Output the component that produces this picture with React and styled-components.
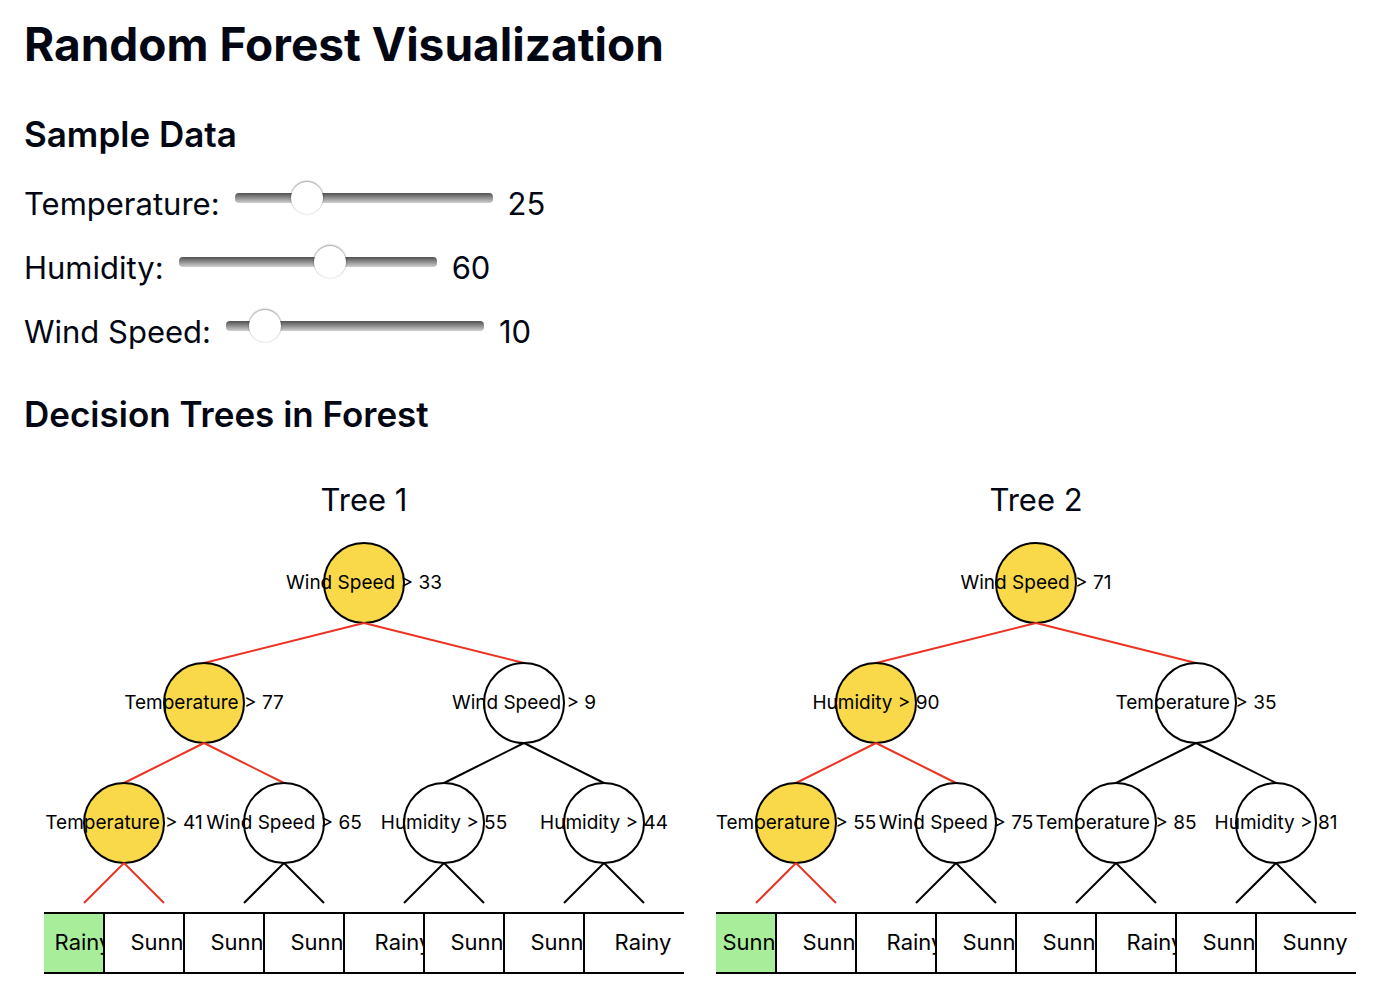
import React, { useState } from "react";
import styled, { createGlobalStyle } from "styled-components";

const GlobalStyle = createGlobalStyle`
  * { box-sizing: border-box; }
  body {
    margin: 0;
    background: #fff;
    color: #020713;
    font-family: Inter, "Liberation Sans", sans-serif;
  }
`;

const Page = styled.main`
  padding: 12px 24px 0;
`;

const Title = styled.h1`
  margin: 0;
  font-size: 46px;
  line-height: 64px;
  font-weight: 700;
`;

const Section = styled.section`
  padding-top: 34px;
`;

const SectionTitle = styled.h2`
  margin: 0;
  font-size: 35px;
  line-height: 48px;
  font-weight: 600;
`;

const Controls = styled.div`
  display: flex;
  flex-direction: column;
  gap: 16px;
  padding-top: 22px;
`;

const ControlRow = styled.div`
  display: flex;
  align-items: center;
  gap: 15px;
  font-size: 31px;
  line-height: 48px;
`;

const Slider = styled.input`
  appearance: none;
  width: 258px;
  height: 34px;
  margin: 0 0 12px;
  background: transparent;

  &::-webkit-slider-runnable-track {
    height: 10px;
    border-radius: 4px;
    background: linear-gradient(#505050, #d0d0d0);
  }

  &::-webkit-slider-thumb {
    appearance: none;
    width: 32px;
    height: 32px;
    margin-top: -11px;
    border-radius: 50%;
    background: #fff;
    box-shadow: 0 -1px 2px rgba(0, 0, 0, 0.35), 0 0 2px rgba(0, 0, 0, 0.2);
  }
`;

const Forest = styled.div`
  display: flex;
  flex-wrap: wrap;
  gap: 32px;
  padding: 38px 0 0 20px;
`;

const TreeFigure = styled.figure`
  margin: 0;
  width: 640px;
`;

const TreeName = styled.figcaption`
  text-align: center;
  font-size: 31px;
  line-height: 48px;
`;

const TreeCanvas = styled.svg`
  display: block;
  width: 100%;
  font-size: 19px;
`;

const Branch = styled.line`
  stroke: ${(p) => (p.$active ? "#eb3323" : "#000")};
  stroke-width: 2;
`;

const NodeCircle = styled.circle`
  fill: ${(p) => (p.$active ? "#f9d849" : "none")};
  stroke: #000;
  stroke-width: 2;
`;

const LeafBox = styled.rect`
  fill: ${(p) => (p.$active ? "#a8ee9a" : "#fff")};
  stroke: #000;
  stroke-width: 2;
`;

const NodeText = styled.text`
  text-anchor: middle;
  fill: #000;
`;

const LeafText = styled(NodeText)`
  font-size: 22px;
`;

const forest = [
  {
    name: "Tree 1",
    levels: [
      ["Wind Speed > 33"],
      ["Temperature > 77", "Wind Speed > 9"],
      ["Temperature > 41", "Wind Speed > 65", "Humidity > 55", "Humidity > 44"],
    ],
    leaves: ["Rainy", "Sunny", "Sunny", "Sunny", "Rainy", "Sunny", "Sunny", "Rainy"],
  },
  {
    name: "Tree 2",
    levels: [
      ["Wind Speed > 71"],
      ["Humidity > 90", "Temperature > 35"],
      ["Temperature > 55", "Wind Speed > 75", "Temperature > 85", "Humidity > 81"],
    ],
    leaves: ["Sunny", "Sunny", "Rainy", "Sunny", "Sunny", "Rainy", "Sunny", "Sunny"],
  },
];

const WIDTH = 640;

function Tree({ tree }) {
  return (
    <TreeFigure>
      <TreeName>{tree.name}</TreeName>
      <TreeCanvas viewBox="0 0 640 460" role="img" aria-label={tree.name}>
        {tree.levels.map((nodes, depth) =>
          nodes.map((label, i) => {
            const slot = WIDTH / nodes.length;
            const x = slot * (i + 0.5);
            const y = 59 + depth * 120;
            const active = i === 0;
            return (
              <g key={`${depth}-${i}`}>
                <NodeCircle cx={x} cy={y} r={40} $active={active} />
                <Branch x1={x} y1={y + 40} x2={x - slot / 4} y2={y + 80} $active={active} />
                <Branch x1={x} y1={y + 40} x2={x + slot / 4} y2={y + 80} $active={active} />
                <NodeText x={x} y={y + 6}>{label}</NodeText>
              </g>
            );
          })
        )}
        {tree.leaves.map((label, i) => (
          <g key={i}>
            <LeafBox x={i * 80 - 20} y={389} width={120} height={60} $active={i === 0} />
            <LeafText x={i * 80 + 39} y={426}>{label}</LeafText>
          </g>
        ))}
      </TreeCanvas>
    </TreeFigure>
  );
}

function Control({ id, label, initial }) {
  const [value, setValue] = useState(initial);
  return (
    <ControlRow>
      <label htmlFor={id}>{label}:</label>
      <Slider
        id={id}
        type="range"
        min="0"
        max="100"
        value={value}
        onChange={(e) => setValue(Number(e.target.value))}
      />
      <output htmlFor={id}>{value}</output>
    </ControlRow>
  );
}

export default function App() {
  return (
    <Page>
      <GlobalStyle />
      <Title>Random Forest Visualization</Title>
      <Section>
        <SectionTitle>Sample Data</SectionTitle>
        <Controls>
          <Control id="temperature" label="Temperature" initial={25} />
          <Control id="humidity" label="Humidity" initial={60} />
          <Control id="wind" label="Wind Speed" initial={10} />
        </Controls>
      </Section>
      <Section>
        <SectionTitle>Decision Trees in Forest</SectionTitle>
        <Forest>
          {forest.map((tree) => (
            <Tree key={tree.name} tree={tree} />
          ))}
        </Forest>
      </Section>
    </Page>
  );
}
